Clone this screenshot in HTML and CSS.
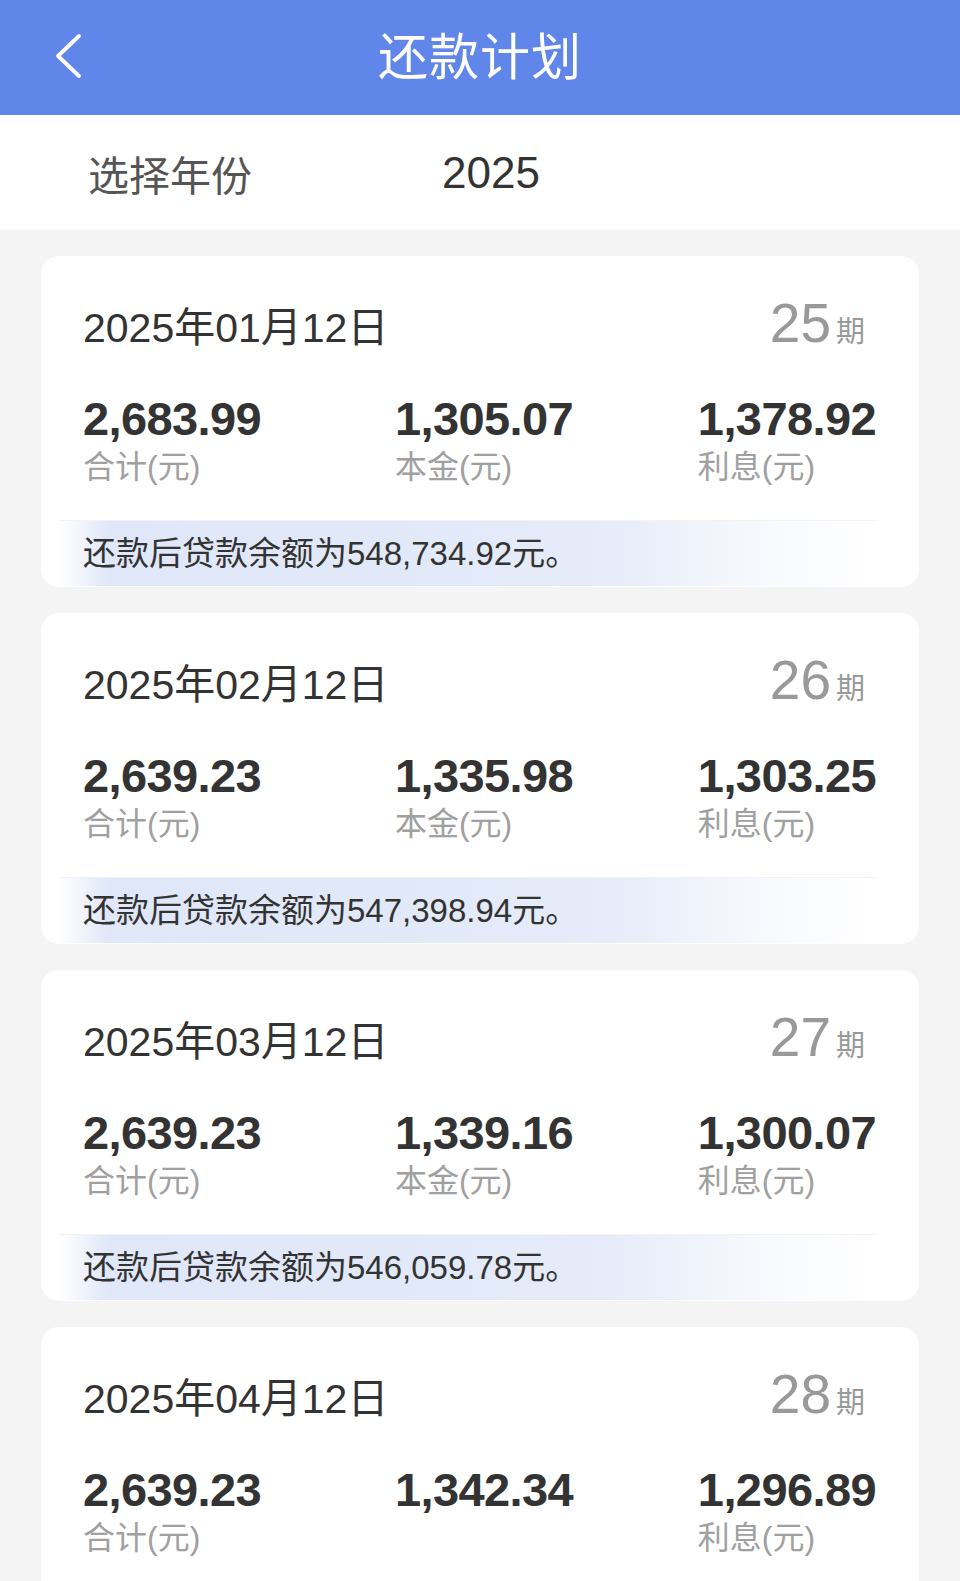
FILE: index.html
```html
<!DOCTYPE html>
<html lang="zh-CN">
<head>
<meta charset="UTF-8">
<meta name="viewport" content="width=device-width, initial-scale=1.0">
<title>还款计划</title>
<link rel="stylesheet" href="styles.css">
</head>
<body>
    <div class="topbar">
        <div class="back">
            <svg width="32" height="48" viewBox="0 0 32 48">
                <polyline points="24,4 3,24 24,44" fill="none" stroke="#fff" stroke-width="3.8" stroke-linecap="round" stroke-linejoin="round"/>
            </svg>
        </div>
        <div class="title">还款计划</div>
        <div></div>
    </div>

    <div class="year-row">
        <span class="year-label">选择年份</span>
        <span class="year-value">2025</span>
    </div>

    <div class="list">
        <!-- 25期 -->
        <div class="card">
            <div class="card-head">
                <span class="date">2025年01月12日</span>
                <span class="period"><b>25</b><i>期</i></span>
            </div>
            <div class="amounts">
                <div class="col"><div class="num">2,683.99</div><div class="lbl">合计(元)</div></div>
                <div class="col mid"><div class="num">1,305.07</div><div class="lbl">本金(元)</div></div>
                <div class="col last"><div class="num">1,378.92</div><div class="lbl">利息(元)</div></div>
            </div>
            <div class="balance">还款后贷款余额为548,734.92元。</div>
        </div>

        <!-- 26期 -->
        <div class="card">
            <div class="card-head">
                <span class="date">2025年02月12日</span>
                <span class="period"><b>26</b><i>期</i></span>
            </div>
            <div class="amounts">
                <div class="col"><div class="num">2,639.23</div><div class="lbl">合计(元)</div></div>
                <div class="col mid"><div class="num">1,335.98</div><div class="lbl">本金(元)</div></div>
                <div class="col last"><div class="num">1,303.25</div><div class="lbl">利息(元)</div></div>
            </div>
            <div class="balance">还款后贷款余额为547,398.94元。</div>
        </div>

        <!-- 27期 -->
        <div class="card">
            <div class="card-head">
                <span class="date">2025年03月12日</span>
                <span class="period"><b>27</b><i>期</i></span>
            </div>
            <div class="amounts">
                <div class="col"><div class="num">2,639.23</div><div class="lbl">合计(元)</div></div>
                <div class="col mid"><div class="num">1,339.16</div><div class="lbl">本金(元)</div></div>
                <div class="col last"><div class="num">1,300.07</div><div class="lbl">利息(元)</div></div>
            </div>
            <div class="balance">还款后贷款余额为546,059.78元。</div>
        </div>

        <!-- 28期 (底部被截断) -->
        <div class="card">
            <div class="card-head">
                <span class="date">2025年04月12日</span>
                <span class="period"><b>28</b><i>期</i></span>
            </div>
            <div class="amounts">
                <div class="col"><div class="num">2,639.23</div><div class="lbl">合计(元)</div></div>
                <div class="col mid"><div class="num">1,342.34</div><div class="lbl hidden">本金(元)</div></div>
                <div class="col last"><div class="num">1,296.89</div><div class="lbl">利息(元)</div></div>
            </div>
        </div>
    </div>
</body>
</html>
```

FILE: styles.css
```css
html, body{
    margin: 0;
    padding: 0;
}
body{
    width: 960px;
    height: 1581px;
    overflow: hidden;
    background: #f4f4f5;
    font-family: "Liberation Sans", Arial, "Noto Sans CJK SC", sans-serif;
    color: #333;
}

.topbar{
    height: 115px;
    background: #6086ea;
    display: grid;
    grid-template-columns: 1fr auto 1fr;
    align-items: center;
}
.back{
    padding-left: 55px;
    display: flex;
    align-items: center;
    margin-top: -4px;
}
.title{
    color: #fff;
    font-size: 50px;
    line-height: 60px;
    letter-spacing: 1px;
}

.year-row{
    height: 115px;
    background: #fff;
    display: flex;
    align-items: center;
    padding-left: 88px;
}
.year-label{
    font-size: 41px;
    color: #555;
    width: 354px;
}
.year-value{
    font-size: 44px;
    color: #333;
}

.list{
    padding: 26px 41px;
    display: flex;
    flex-direction: column;
    gap: 26px;
}
.card{
    background: #fff;
    border-radius: 18px;
    height: 331px;
    overflow: hidden;
}
.card-head{
    display: flex;
    justify-content: space-between;
    align-items: baseline;
    padding: 40px 54px 0 42px;
    height: 54px;
    line-height: 54px;
}
.date{
    font-size: 41px;
    color: #333;
}
.period b{
    font-weight: normal;
    font-size: 55px;
    color: #999;
}
.period i{
    font-style: normal;
    font-size: 29px;
    color: #999;
    margin-left: 5px;
}

.amounts{
    display: grid;
    grid-template-columns: 1fr auto 1fr;
    padding: 0 43px 0 42px;
    margin-top: 43px;
}
.col.mid{
    margin-left: 9px;
}
.col.last{
    justify-self: end;
}
.num{
    font-size: 47px;
    font-weight: bold;
    line-height: 52px;
    letter-spacing: -0.6px;
    color: #333;
}
.lbl{
    font-size: 32px;
    line-height: 40px;
    margin-top: 2px;
    color: #a0a0a0;
}
.lbl.hidden{
    visibility: hidden;
}

.balance{
    margin: 33px 43px 0 18px;
    height: 65px;
    line-height: 65px;
    padding-left: 24px;
    font-size: 33px;
    color: #333;
    border-top: 1px solid #f0f2f6;
    background: linear-gradient(90deg, rgba(222,229,248,0) 0%, #e0e7f8 6%, #e1e8f8 40%, #e6ecf9 68%, rgba(246,248,253,0.7) 88%, rgba(255,255,255,0) 100%);
}
```
